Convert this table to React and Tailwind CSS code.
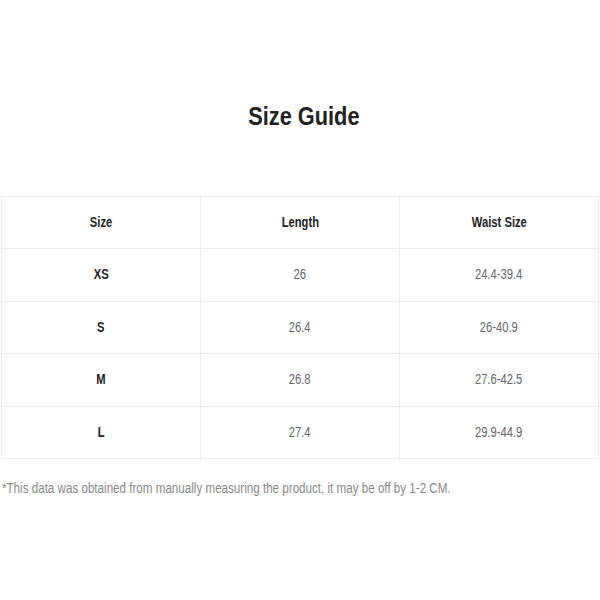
import React from "react";

const rows = [
  { size: "XS", length: "26", waist: "24.4-39.4" },
  { size: "S", length: "26.4", waist: "26-40.9" },
  { size: "M", length: "26.8", waist: "27.6-42.5" },
  { size: "L", length: "27.4", waist: "29.9-44.9" },
];

const font = { fontFamily: '"Liberation Sans", Arial, sans-serif' };

// condensed look: the reference uses an Arial Narrow style face
function Narrow({ children, className = "" }) {
  return <span className={"inline-block scale-x-[0.8] " + className}>{children}</span>;
}

export default function App() {
  return (
    <div className="w-[600px] h-[600px] bg-white overflow-hidden" style={font}>
      <h1 className="pt-[100px] text-center text-[25px] leading-[32px] font-bold text-[#222] pl-[8px]">
        <span className="inline-block scale-x-[0.87]">Size Guide</span>
      </h1>

      <table className="mt-[64px] ml-[1px] w-[598px] border-collapse table-fixed">
        <thead>
          <tr className="h-[52px]">
            <th className="border border-[#ececec] text-[14px] font-bold text-[#222]"><Narrow>Size</Narrow></th>
            <th className="border border-[#ececec] text-[14px] font-bold text-[#222]"><Narrow>Length</Narrow></th>
            <th className="border border-[#ececec] text-[14px] font-bold text-[#222]"><Narrow>Waist Size</Narrow></th>
          </tr>
        </thead>
        <tbody>
          {rows.map((r) => (
            <tr key={r.size} className="h-[52.5px]">
              <td className="border border-[#ececec] text-center text-[14px] font-bold text-[#222]"><Narrow>{r.size}</Narrow></td>
              <td className="border border-[#ececec] text-center text-[14px] text-[#666]"><Narrow>{r.length}</Narrow></td>
              <td className="border border-[#ececec] text-center text-[14px] text-[#666]"><Narrow>{r.waist}</Narrow></td>
            </tr>
          ))}
        </tbody>
      </table>

      <p className="mt-[19px] ml-[2px] text-[14px] leading-[20px] text-[#888] whitespace-nowrap">
        <span className="inline-block scale-x-[0.83] origin-left">
          *This data was obtained from manually measuring the product, it may be off by 1-2 CM.
        </span>
      </p>
    </div>
  );
}
